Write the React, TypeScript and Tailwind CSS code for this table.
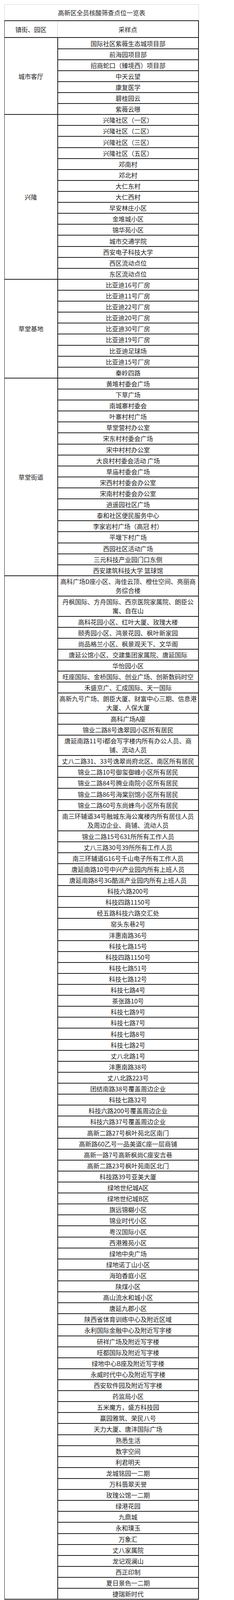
import React from 'react';

type Item = string | string[];

interface Section {
  name: string;
  items: Item[];
}

const sections: Section[] = [
  {
    name: '城市客厅',
    items: [
      '国际社区紫薇生态城项目部',
      '前海园项目部',
      '招商蛇口（臻境西）项目部',
      '中天云望',
      '康复医学',
      '碧桂园云',
      '紫薇云暻',
    ],
  },
  {
    name: '兴隆',
    items: [
      '兴隆社区（一区）',
      '兴隆社区（二区）',
      '兴隆社区（三区）',
      '兴隆社区（五区）',
      '邓南村',
      '邓北村',
      '大仁东村',
      '大仁西村',
      '早安林庄小区',
      '金堆城小区',
      '锦华苑小区',
      '城市交通学院',
      '西安电子科技大学',
      '西区流动点位',
      '东区流动点位',
    ],
  },
  {
    name: '草堂基地',
    items: [
      '比亚迪16号厂房',
      '比亚迪11号厂房',
      '比亚迪22号厂房',
      '比亚迪20号厂房',
      '比亚迪30号厂房',
      '比亚迪19号厂房',
      '比亚迪足球场',
      '比亚迪15号厂房',
      '秦岭四路',
    ],
  },
  {
    name: '草堂街道',
    items: [
      '黄堆村委会广场',
      '下草广场',
      '南城寨村委会',
      '叶寨村村广场',
      '草堂营村办公室',
      '宋东村村委会广场',
      '宋中村村办公室',
      '大良村村委会活动 广场',
      '草庙村委会广场',
      '宋西村村委会办公室',
      '宋南村村委会办公室',
      '逍遥园社区广场',
      '泰和社区便民服务中心',
      '李家岩村广场（高冠 村）',
      '平堰下村广场',
      '西园社区活动广场',
      '三元科技产业园门口东侧',
      '西安建筑科技大学 篮球馆',
    ],
  },
  {
    name: '',
    items: [
      ['高科广场D座小区、海佳云顶、橙仕空间、亮丽商', '务综合楼'],
      ['丹枫国际、方舟国际、西京医院家属院、朗臣公', '寓、自在山'],
      '高科花园小区、红叶大厦、玫瑰大楼',
      '颐秀园小区、鸿景花园、枫叶新家园',
      '尚品格兰小区、枫景观天下、文华阁',
      '唐延公馆小区、交建集团家属院、唐延国际',
      '华怡园小区',
      '旺座国际、金桥国际、创业广场、创新数码时空',
      '禾盛京广、汇成国际、天一国际',
      ['高新九号广场、朗臣大厦、财富中心三期、信息港', '大厦、人保大厦'],
      '高科广场A座',
      '锦业二路8号逸翠园小区所有居民',
      ['唐延南路11号i都会写字楼内所有办公人员、商', '铺、流动人员'],
      '丈八二路31、33号逸翠尚府北区、南区所有居民',
      '锦业二路10号御玺御峰小区所有居民',
      '锦业二路84号腾业南院小区所有居民',
      '锦业二路86号海棠别馆小区所有居民',
      '锦业二路60号东尚蜂鸟小区所有居民',
      ['南三环辅道34号融城东海公寓楼内所有居住人员', '及周边企业、商铺、流动人员'],
      '锦业二路15号631所所有工作人员',
      '丈八三路30号39所所有工作人员',
      '南三环辅道G16号千山电子所有工作人员',
      '唐延南路10号中兴产业园内所有上班人员',
      '唐延南路8号3G酷派产业园内所有上班人员',
      '科技六路200号',
      '科技四路1150号',
      '经五路科技六路交汇处',
      '窑头东巷2号',
      '沣惠南路36号',
      '科技七路15号',
      '科技四路1150号',
      '科技七路51号',
      '科技七路12号',
      '科技七路4号',
      '茶张路10号',
      '科技七路9号',
      '科技七路7号',
      '科技七路8号',
      '科技七路2号',
      '丈八北路1号',
      '沣惠南路38号',
      '丈八北路223号',
      '团结南路38号覆盖周边企业',
      '科技七路32号',
      '科技六路200号覆盖周边企业',
      '科技六路37号覆盖周边企业',
      '高新二路27号枫叶苑北区南门',
      '高新路60乙号一品美道C座一层商铺',
      '高新一路7号高新枫尚C座安吉巷',
      '高新二路23号枫叶苑南区北门',
      '科技路39号亚美大厦',
      '绿地世纪城A区',
      '绿地世纪城B区',
      '旗远锦樾小区',
      '锦业时代小区',
      '粤汉国际小区',
      '西港雅苑小区',
      '绿地中央广场',
      '绿地诺丁山小区',
      '海珀香庭小区',
      '陕煤小区',
      '高山流水和城小区',
      '唐延九郡小区',
      '陕西省体育训练中心及附近区域',
      '永利国际金融中心及附近写字楼',
      '研祥广场及附近写字楼',
      '旺都国际及附近写字楼',
      '绿地中心B座及附近写字楼',
      '永威时代中心及附近写字楼',
      '西安软件园及附近写字楼',
      '药监局小区',
      '五米魔方，盛方科技园',
      '赢园雅筑、荣民八号',
      '天力大厦、唐沣国际广场',
      '熟悉生活',
      '数字空间',
      '利君明天',
      '龙城铭园一二期',
      '万科翡翠天誉',
      '玫瑰公馆一二期',
      '绿港花园',
      '九鼎城',
      '永和璞玉',
      '万象汇',
      '丈八家属院',
      '龙记观澜山',
      '西正印制',
      '夏日景色一二期',
      '捷瑞新时代',
    ],
  },
];

// the photographed area stops at 4096px, so vertical sizes are packed to fit it
const Row = ({ item }: { item: Item }) => {
  if (Array.isArray(item)) {
    return (
      <div className="h-[51.84px] border-b-2 border-[#1c1c1c] flex flex-col items-center justify-center leading-[22.8px]">
        {item.map((line, i) => (
          <div key={i} className="whitespace-nowrap">{line}</div>
        ))}
      </div>
    );
  }
  return (
    <div className="h-[28.11px] border-b-2 border-[#1c1c1c] flex items-center justify-center leading-[22px] whitespace-nowrap">
      {item}
    </div>
  );
};

const App = () => {
  return (
    <div
      className="w-[600px] overflow-hidden bg-white pt-[10.5px] pl-[11px] text-[16px] text-[#222]"
      style={{ fontFamily: '"Noto Sans CJK SC", "Noto Sans", sans-serif' }}
    >
      <div className="w-[499px]">
        <div className="h-[41.3px] border border-b-0 border-[#d2d2d2] flex items-center justify-center">
          高新区全员核酸筛查点位一览表
        </div>

        <div className="border-l-[1.5px] border-r-2 border-[#1c1c1c]">
          <div className="h-[45.7px] border-t-2 border-b-2 border-[#1c1c1c] grid grid-cols-[134.5px_1fr]">
            <div className="flex items-center justify-center">镇街、园区</div>
            <div className="border-l border-[#c8c8c8] flex items-center justify-center">采样点</div>
          </div>

          {sections.map((section, idx) => (
            <div key={idx} className="grid grid-cols-[134.5px_1fr]">
              <div className="border-b-2 border-[#1c1c1c] flex items-center justify-center">
                {section.name}
              </div>
              <div className="min-w-0 border-l-2 border-[#1c1c1c]">
                {section.items.map((item, i) => (
                  <Row key={i} item={item} />
                ))}
              </div>
            </div>
          ))}
        </div>
      </div>
    </div>
  );
};

export default App;
